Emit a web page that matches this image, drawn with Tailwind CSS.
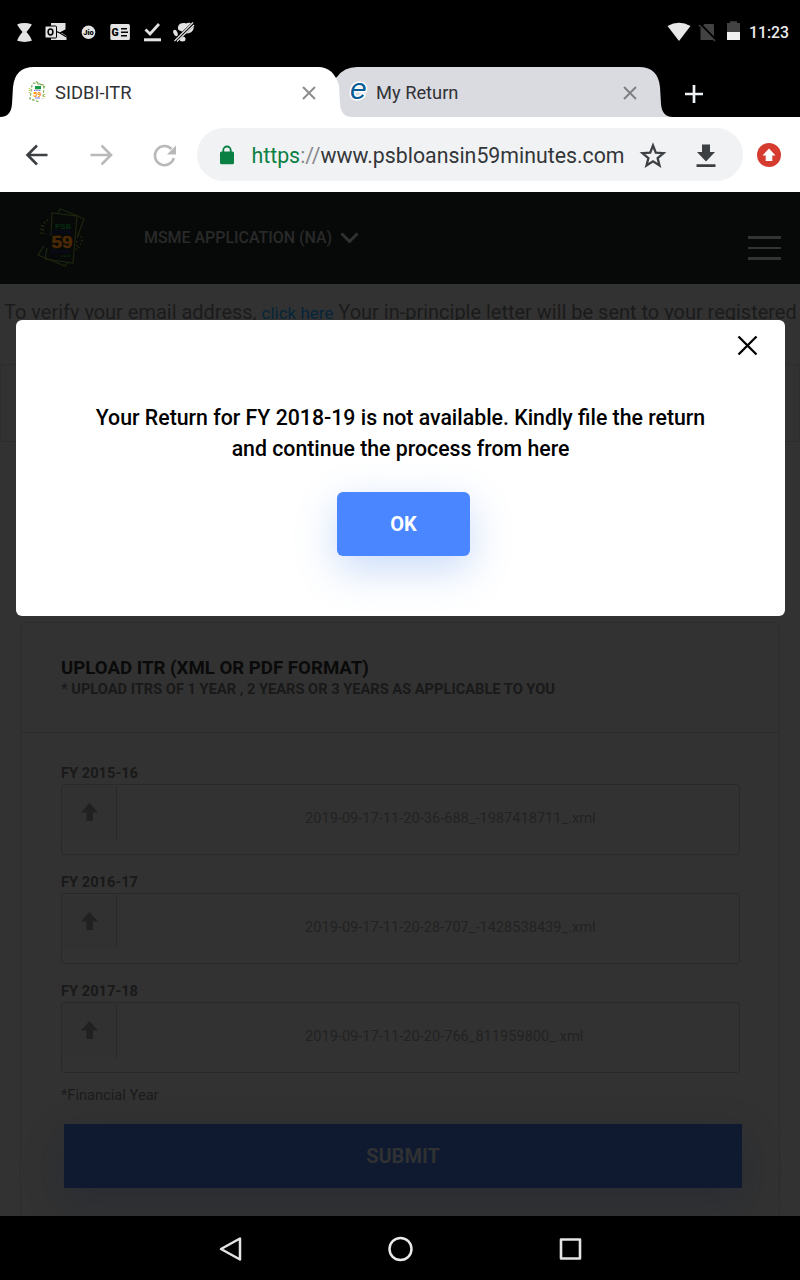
<!DOCTYPE html>
<html lang="en">
<head>
<meta charset="utf-8">
<title>SIDBI-ITR</title>
<script src="https://cdn.jsdelivr.net/npm/@tailwindcss/browser@4"></script>
</head>
<body class="bg-black">
<div class="flex h-[1280px] w-[800px] flex-col overflow-hidden bg-black font-['Roboto',sans-serif]">

  <!-- status bar -->
  <div class="flex h-[66px] shrink-0 items-center pl-[16px] pr-[11px]">
    <svg class="mt-[-2px] h-[22px] w-[184px] shrink-0" viewBox="16 21 184 22" fill="#e3e3e3">
      <path d="M17.300 24.200Q24.500 21.800 31.700 24.200Q31.500 26 26.500 32Q31.600 38 31.800 40.800Q24.500 43 17.200 40.800Q17.500 38 22.500 32Q17.500 26 17.300 24.200Z"/>
      <path d="M51 23H65.500V30L61 32.300L66.500 36V40H51Z"/>
      <path d="M56.500 31.500L60 33L66.500 29.500M60 33L66.500 37" stroke="#000" stroke-width="1.300" fill="none"/>
      <rect x="45" y="26" width="11.500" height="12" rx="1" stroke="#000" stroke-width="1"/>
      <ellipse cx="50.500" cy="32" rx="2.400" ry="2.900" fill="none" stroke="#000" stroke-width="1.500"/>
      <circle cx="88.500" cy="32.300" r="6.800"/>
      <text x="88.500" y="35" text-anchor="middle" font-size="7.500" font-weight="900" fill="#000">Jio</text>
      <rect x="110.300" y="24" width="19.600" height="16" rx="1.500"/>
      <text x="111.500" y="35.900" font-size="10.500" font-weight="900" fill="#000">G</text>
      <path d="M121 28.800H127M121 32.300H128M121 35.800H127" stroke="#000" stroke-width="1.600"/>
      <path d="M145.500 29.500L150 34L159 24" fill="none" stroke="#e3e3e3" stroke-width="2.700"/>
      <rect x="144" y="38.300" width="17" height="3"/>
      <path d="M178.500 30C176.500 25 181 22 186 23.500C190 21.500 195 24 193.500 29C192.500 33 187 34.500 184 32.500Z"/>
      <ellipse cx="175.500" cy="33" rx="2" ry="3.300" transform="rotate(-25 175.500 33)"/>
      <ellipse cx="182.500" cy="39" rx="3" ry="2.500"/>
      <path d="M175.500 41L193.500 23.500" stroke="#000" stroke-width="4"/>
      <path d="M174.500 41L193 22.500M177 41.500L194 25" stroke="#e3e3e3" stroke-width="1.200"/>
    </svg>
    <svg class="ml-auto mt-[-2px] h-[22px] w-[76px]" viewBox="666 21 76 22">
      <path d="M667.500 26Q679 19.500 690.500 26L679 41Z" fill="#e8e8e8"/>
      <path d="M704.500 24H713Q714 24 714 25V40H700.500V28Z" fill="#424242"/>
      <path d="M700.500 24L716.500 40.500" stroke="#000" stroke-width="2"/><path d="M699 25L715 41" stroke="#424242" stroke-width="1.500"/>
      <path d="M727 23H730V21.300H737V23H740V32H727Z" fill="#424242"/>
      <rect x="727" y="32" width="13" height="8" fill="#f1f1f1"/>
    </svg>
    <span class="ml-[7px] w-[40px] whitespace-nowrap text-[15.800px] font-medium text-[#ececec]">11:23</span>
  </div>

  <!-- tab strip -->
  <div class="relative h-[51px] shrink-0">
    <svg class="absolute inset-0 h-[51px] w-[800px]" viewBox="0 66 800 51">
      <path d="M318 117V90L337 77Q344 67 357 67H639Q658 67 660 87L661 104Q662 117 673 117Z" fill="#dadbe0"/>
      <path d="M0 117Q11 117 12 104L13 87Q15 67 34 67H318Q334 67 339 86L340 104Q341 117 352 117Z" fill="#fff"/>
    </svg>
    <div class="relative flex h-full items-center">
      <svg class="ml-[28px] h-[22px] w-[18px] shrink-0" viewBox="28 81 18 22" fill="none">
        <path d="M33 83L44 85L43 99M32 85L30 99L40 102M36 81.500L45 87" stroke="#79a94b" stroke-dasharray="2.500 1.600" stroke-width="1.200"/>
        <rect x="35" y="86" width="6" height="3.200" fill="#159b45"/>
        <path d="M34 90.300H41" stroke="#5b55c9" stroke-dasharray="1.500 .7"/>
        <text x="33.300" y="96.500" font-size="7" font-weight="900" fill="#ff9415">59</text>
        <path d="M35 98H40" stroke="#5b55c9" stroke-width=".8"/>
        <path d="M29.500 88V94M44.500 94V98" stroke="#b5c93d" stroke-width="1.500" stroke-dasharray="1 1"/>
      </svg>
      <span class="ml-[9px] mt-[3px] w-[247px] whitespace-nowrap text-[18.400px] text-[#303236]">SIDBI-ITR</span>
      <svg class="mt-[2px] h-[14px] w-[14px] shrink-0" viewBox="0 0 14 14" stroke="#8d8d8d" stroke-width="2"><path d="M1 1L13 13M13 1L1 13"/></svg>
      <svg class="ml-[30px] h-[36px] w-[26px] shrink-0 overflow-visible" viewBox="346 74 26 36" font-family="Liberation Sans" font-size="30" font-style="italic" fill="#075d96"><text x="350" y="99" stroke="#fff" stroke-width="3" paint-order="stroke">e</text></svg>
      <span class="ml-[4px] mt-[2px] w-[247px] whitespace-nowrap text-[18.300px] text-[#303236]">My Return</span>
      <svg class="mt-[2px] h-[14px] w-[14px] shrink-0" viewBox="0 0 14 14" stroke="#808083" stroke-width="2"><path d="M1 1L13 13M13 1L1 13"/></svg>
      <svg class="ml-[47px] mt-[4px] h-[20px] w-[20px] shrink-0" viewBox="0 0 20 20" stroke="#eef2f5" stroke-width="2.700"><path d="M10 1V19M1 10H19"/></svg>
    </div>
  </div>

  <!-- browser toolbar -->
  <div class="flex h-[75px] shrink-0 items-center bg-white pl-[24px]">
    <svg class="h-[26px] w-[154px] shrink-0" viewBox="24 142 154 26" fill="none">
      <path d="M47.500 155H28M37 145.500L27.500 155L37 164.500" stroke="#3c4043" stroke-width="2.600"/>
      <path d="M90.500 155H110M101.500 145.500L111 155L101.500 164.500" stroke="#b9b9b9" stroke-width="2.600"/>
      <path d="M173.800 158A9.600 9.600 0 1 1 171.500 149" stroke="#b9b9b9" stroke-width="2.600"/>
      <path d="M176 145.500V154.500H167Z" fill="#b9b9b9"/>
    </svg>
    <div class="ml-[19px] flex h-[53px] w-[546px] items-center rounded-full bg-[#f1f2f4] pl-[22px]">
      <svg class="h-[20px] w-[16px] shrink-0" viewBox="0 0 16 20"><rect x="1" y="6.500" width="14" height="12.800" rx="1.500" fill="#0b8043"/><path d="M4.300 8V5.200A3.700 3.700 0 0 1 11.700 5.200V8" fill="none" stroke="#0b8043" stroke-width="1.800"/></svg>
      <span class="ml-[16.500px] mt-[3px] w-[387.500px] whitespace-nowrap text-[21.300px] text-[#333639]"><span class="text-[#0b8043]">https</span><span class="text-[#85888b]">://</span>www.psbloansin59minutes.com</span>
      <svg class="h-[28px] w-[78px] shrink-0" viewBox="639 141 78 28">
        <path d="M653 145.500L655.800 152.600L663.500 153.200L657.600 158.100L659.500 165.500L653 161.400L646.500 165.500L648.400 158.100L642.500 153.200L650.200 152.600Z" fill="none" stroke="#3c4043" stroke-width="2.300"/>
        <path d="M702 144.500H710V152H715L706 161.500L697 152H702ZM696.500 164.300H715.500V167H696.500Z" fill="#3c4043"/>
      </svg>
    </div>
    <svg class="ml-[14px] h-[24px] w-[24px]" viewBox="0 0 24 24"><circle cx="12" cy="12" r="12" fill="#d53c2f"/><path d="M12 5.500L18.500 12.500H15.300V18H8.700V12.500H5.500Z" fill="#fff"/></svg>
  </div>

  <!-- site header -->
  <div class="flex h-[92px] shrink-0 items-center bg-[#070908]">
    <svg class="ml-[36px] h-[60px] w-[50px] shrink-0" viewBox="36 208 50 60" fill="none">
      <g stroke="#1c260f" stroke-width="1.200">
        <path d="M51 236L52 213L77 216L73 263L45 259L47 248"/>
        <path d="M58 213L60 209L78 216L84 219L77 238M44 246L38 255L65 266L68 262"/>
      </g>
      <path d="M48 220Q38 226 42 236M45 222Q42 228 44 234M78 234Q86 238 78 248M77 241L76 252" stroke="#242a10" stroke-width="1.800" stroke-dasharray="1.300 2.500"/>
      <g font-family="Liberation Sans" font-weight="700">
        <text x="55" y="228.500" font-size="7.500" textLength="16" lengthAdjust="spacingAndGlyphs" fill="#062b12">PSB</text>
        <text x="51" y="234" font-size="5" textLength="20" fill="#0b0a26">LOANS</text>
        <text x="51.500" y="248" font-size="16" textLength="21" lengthAdjust="spacingAndGlyphs" fill="#4c2903" stroke="#4c2903" stroke-width=".5">59</text>
        <text x="51" y="253" font-size="4" textLength="19" fill="#0b0a26">MINUTES</text>
        <text x="60" y="257" font-size="4" textLength="10" fill="#062b12">.com</text>
      </g>
    </svg>
    <span class="ml-[58px] w-[196px] whitespace-nowrap text-[15.950px] font-medium text-[#292a2a]">MSME APPLICATION (NA)</span>
    <svg class="h-[12px] w-[19px]" viewBox="0 0 19 12" fill="none" stroke="#303131" stroke-width="3"><path d="M1.500 1.500L9.500 9.500L17.500 1.500"/></svg>
    <div class="ml-auto mr-[19px] mt-[20px] flex h-[24px] w-[33px] flex-col justify-between">
      <div class="h-[3px] bg-[#333]"></div><div class="h-[2px] bg-[#333]"></div><div class="h-[3px] bg-[#333]"></div>
    </div>
  </div>

  <!-- page under the dialog -->
  <div class="relative flex h-[932px] shrink-0 flex-col overflow-hidden bg-[#323232]">
    <p class="mt-[16px] h-[24px] shrink-0 whitespace-nowrap pl-[4px] text-[19.980px] leading-[24px] text-[#1b1b1b]">To verify your email address, <span class="text-[17px] text-[#06253a]">click here</span> Your in-principle letter will be sent to your registered</p>
    <div class="mt-[40px] h-[78px] shrink-0 border border-[#2d2d2d]"></div>
    <div class="mx-auto mt-[180px] h-[620px] w-[760px] shrink-0 rounded-t-[6px] border border-[#2d2d2d]">
      <div class="h-[110px] border-b border-[#2b2b2b] pl-[40px] pt-[33px]">
        <h2 class="whitespace-nowrap text-[18.650px] font-bold leading-[24px] text-[#0a0a0a]">UPLOAD ITR (XML OR PDF FORMAT)</h2>
        <p class="whitespace-nowrap text-[14.640px] font-bold leading-[18px] text-[#191919]">* UPLOAD ITRS OF 1 YEAR , 2 YEARS OR 3 YEARS AS APPLICABLE TO YOU</p>
      </div>
      <div class="flex flex-col gap-[18px] pl-[40px] pr-[39px] pt-[31px]">
        <div>
          <h3 class="h-[20px] text-[14.670px] font-bold leading-[18px] text-[#191919]">FY 2015-16</h3>
          <div class="flex h-[71px] rounded-[3px] border border-[#292929]">
            <div class="mt-px flex h-[54px] w-[55px] justify-center border-r border-[#292929] bg-[#313131] pt-[17px]"><svg class="h-[18px] w-[17px]" viewBox="0 0 17 18" fill="#212121"><path d="M8.500 0L17 9.500H12V18H5.500V9.500H0Z"/></svg></div>
            <span class="ml-[188px] mt-[24px] whitespace-nowrap text-[14.620px] leading-[18px] text-[#222]">2019-09-17-11-20-36-688_-1987418711_.xml</span>
          </div>
        </div>
        <div>
          <h3 class="h-[20px] text-[14.670px] font-bold leading-[18px] text-[#191919]">FY 2016-17</h3>
          <div class="flex h-[71px] rounded-[3px] border border-[#292929]">
            <div class="mt-px flex h-[54px] w-[55px] justify-center border-r border-[#292929] bg-[#313131] pt-[17px]"><svg class="h-[18px] w-[17px]" viewBox="0 0 17 18" fill="#212121"><path d="M8.500 0L17 9.500H12V18H5.500V9.500H0Z"/></svg></div>
            <span class="ml-[188px] mt-[24px] whitespace-nowrap text-[14.620px] leading-[18px] text-[#222]">2019-09-17-11-20-28-707_-1428538439_.xml</span>
          </div>
        </div>
        <div>
          <h3 class="h-[20px] text-[14.670px] font-bold leading-[18px] text-[#191919]">FY 2017-18</h3>
          <div class="flex h-[71px] rounded-[3px] border border-[#292929]">
            <div class="mt-px flex h-[54px] w-[55px] justify-center border-r border-[#292929] bg-[#313131] pt-[17px]"><svg class="h-[18px] w-[17px]" viewBox="0 0 17 18" fill="#212121"><path d="M8.500 0L17 9.500H12V18H5.500V9.500H0Z"/></svg></div>
            <span class="ml-[188px] mt-[24px] whitespace-nowrap text-[14.620px] leading-[18px] text-[#222]">2019-09-17-11-20-20-766_811959800_.xml</span>
          </div>
        </div>
      </div>
      <p class="ml-[40px] mt-[13px] text-[14.670px] leading-[18px] text-[#1b1b1b]">*Financial Year</p>
      <div class="ml-[43px] mt-[20px] flex h-[64px] w-[678px] items-center justify-center bg-[#0f1a31] text-[20px] font-bold text-[#303132] shadow-[0_13px_40px_rgba(15,26,60,0.220)]">SUBMIT</div>
    </div>

    <!-- dialog -->
    <div class="absolute left-[16px] top-[36px] flex h-[296px] w-[769px] flex-col items-center overflow-hidden rounded-[6px] bg-white">
      <svg class="mr-[27px] mt-[15px] h-[21px] w-[21px] shrink-0 self-end" viewBox="0 0 21 21" stroke="#000" stroke-width="2.300"><path d="M1.500 1.500L19.500 19.500M19.500 1.500L1.500 19.500"/></svg>
      <p class="mt-[46px] whitespace-nowrap text-center text-[21.290px] font-medium leading-[31px] text-black">Your Return for FY 2018-19 is not available. Kindly file the return<br>and continue the process from here</p>
      <div class="ml-[6px] mt-[28px] flex h-[64px] w-[133px] items-center justify-center rounded-[6px] bg-[#4a86ff] text-[20px] font-bold text-white shadow-[0_13px_40px_rgba(74,134,232,0.300)]">OK</div>
    </div>
  </div>

  <!-- Android navigation bar -->
  <div class="flex h-[64px] shrink-0 items-center justify-center gap-[144px] pl-[2px] pt-px">
    <svg class="h-[26px] w-[26px]" viewBox="0 0 26 26" fill="none" stroke="#e4e4e4" stroke-width="2.500" stroke-linejoin="round"><path d="M22 2.500V23.500L3 13Z"/></svg>
    <svg class="h-[26px] w-[26px]" viewBox="0 0 26 26" fill="none" stroke="#e9e9e9" stroke-width="2.500"><circle cx="12.500" cy="13" r="11"/></svg>
    <svg class="h-[26px] w-[26px]" viewBox="0 0 26 26" fill="none" stroke="#e4e4e4" stroke-width="2.600" stroke-linejoin="round"><rect x="3" y="3.500" width="19" height="19"/></svg>
  </div>
</div>
</body>
</html>
